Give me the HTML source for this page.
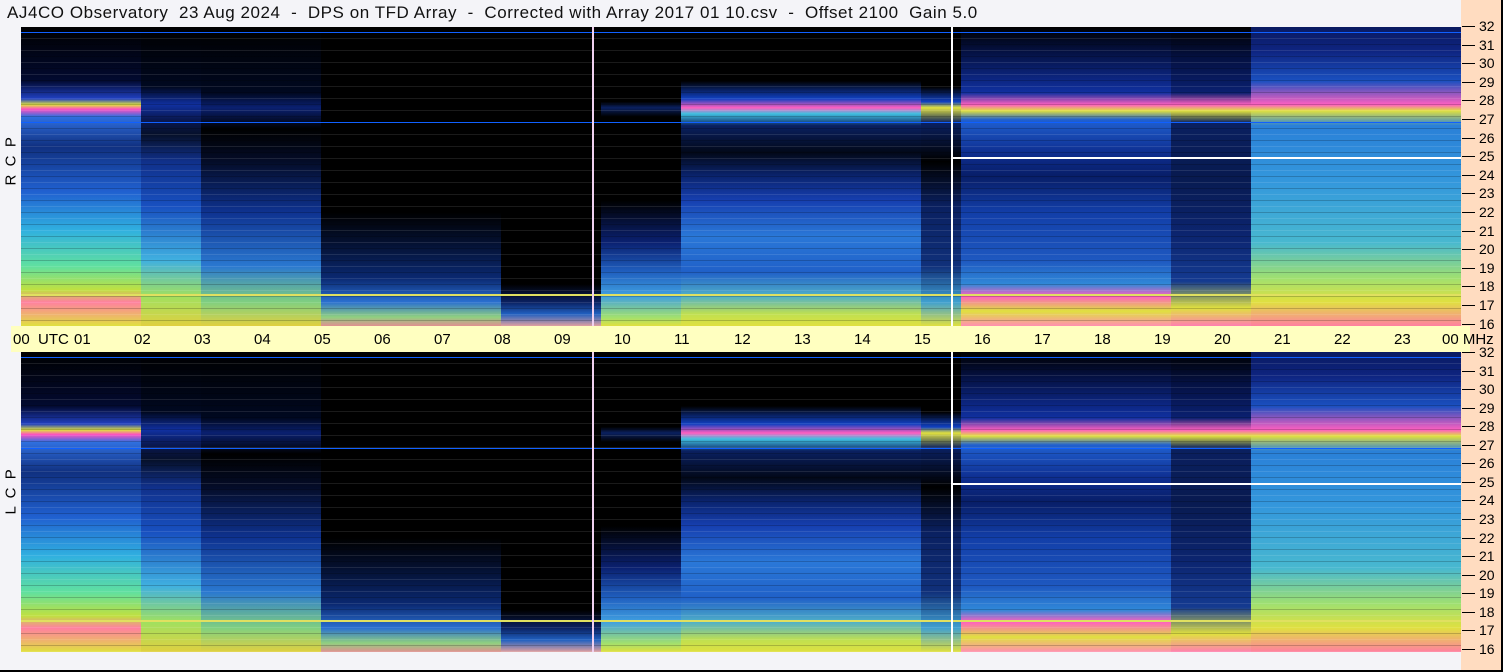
<!DOCTYPE html><html><head><style>
*{margin:0;padding:0;box-sizing:border-box}
body{width:1503px;height:672px;background:#f4f4f8;position:relative;overflow:hidden;font-family:"Liberation Sans",sans-serif}
#frame{position:absolute;right:0;top:0;width:2px;height:672px;background:#000}
#frameb{position:absolute;left:0;bottom:0;width:1503px;height:2px;background:#000}
#title{position:absolute;left:7px;top:3px;font-size:17px;letter-spacing:0.55px;color:#111;white-space:pre}
#peach{position:absolute;left:1461px;top:0;width:40px;height:670px;background:#ffdcc0}
.panel{position:absolute;left:21px;width:1440px;display:flex;overflow:hidden;background:#000}
.panel div{height:100%}
#p1{top:27px;height:299px}#p2{top:352px;height:300px}
.A{width:120px;background:linear-gradient(#000 0,#020a30 18%,#2040c0 24%,#e0e040 26%,#ff50c0 27.5%,#3070e0 30%,#103080 40%,#2060d0 55%,#30b0e0 68%,#60e0a0 80%,#c0e040 88%,#ff80a0 92%,#e0e040 100%)}
.B{width:60px;background:linear-gradient(#000 0,#000820 20%,#1030a0 26%,#0a1850 31%,#06102a 36%,#10308a 45%,#1850c0 60%,#40b0e0 78%,#a0e060 90%,#e0d040 100%)}
.B2{width:120px;background:linear-gradient(#000 0,#000820 22%,#0a2070 27%,#000 34%,#040c28 45%,#0e3290 62%,#2a78d0 80%,#80d080 92%,#e0d040 100%)}
.C{width:180px;background:linear-gradient(#000 0,#000 62%,#041030 72%,#0a2870 84%,#2a70d0 92%,#90d080 97%,#e09090 100%)}
.D{width:100px;background:linear-gradient(#000 0,#000 86%,#0a2060 92%,#2060c0 96%,#e0a0a0 100%)}
.E{width:80px;background:linear-gradient(#000 0,#000 25%,#0a2060 27%,#000 30%,#000 58%,#0a2070 72%,#2060c0 82%,#40a0e0 90%,#a0e070 97%,#e0e040 100%)}
.F{width:240px;background:linear-gradient(#000 0,#000 18%,#1040c0 24%,#ff60c0 27%,#40c0e0 29%,#0a2060 33%,#020818 42%,#0a2470 50%,#163fb0 58%,#2a78d8 70%,#2060c8 82%,#50b0c8 90%,#c0e050 96%,#e0e040 100%)}
.G{width:40px;background:linear-gradient(#000 0,#000 20%,#1040c0 25%,#e0e040 27%,#0a2060 32%,#000 45%,#0a2060 60%,#10307a 80%,#40a0d0 92%,#e0e040 100%)}
.H{width:210px;background:linear-gradient(#000 0,#041040 8%,#0a2070 15%,#1030a0 22%,#ff60c0 26%,#e0e040 28%,#2060d0 31%,#0e2e90 42%,#081e68 50%,#123ea8 62%,#1e58c0 78%,#3088d8 86%,#ff60c0 90%,#e0e040 95%,#ff90b0 100%)}
.I{width:80px;background:linear-gradient(#000 0,#041040 10%,#0a2070 22%,#ff60c0 26%,#e0e040 28%,#0a2060 32%,#081a50 50%,#0c2570 70%,#143a90 85%,#e0e040 94%,#ff80b0 100%)}
.J{width:210px;background:linear-gradient(#0a1a60 0,#0e2480 8%,#1a50c0 18%,#ff60c0 26%,#e0e040 28%,#2a80d8 33%,#3498dc 52%,#48b8d0 72%,#a0e070 84%,#e0e040 92%,#ff80a0 100%)}
.ov{position:absolute;left:21px;width:1440px;pointer-events:none;
background:repeating-linear-gradient(180deg,rgba(0,0,0,0) 0,rgba(0,0,0,0) 5px,rgba(0,0,0,.2) 5px,rgba(0,0,0,.2) 6px,rgba(0,0,0,0) 6px,rgba(0,0,0,0) 11px,rgba(255,255,255,.1) 11px,rgba(255,255,255,.1) 12px)}
.hl{position:absolute;height:1px}
.vl{position:absolute;width:2px;background:#fff}
#bar{position:absolute;left:11px;top:326px;width:1459px;height:26px;background:#ffffc0}
.lab{position:absolute;font-size:15px;color:#000;top:331px;white-space:pre}
.rl{position:absolute;left:1479px;font-size:14px;color:#000}
.rt{position:absolute;left:1462px;width:13px;height:1px;background:#000}
.side{position:absolute;left:2px;width:18px;font-size:15px;transform:rotate(-90deg);white-space:pre;text-align:center}
</style></head><body>
<div id="title">AJ4CO Observatory  23 Aug 2024  -  DPS on TFD Array  -  Corrected with Array 2017 01 10.csv  -  Offset 2100  Gain 5.0</div>
<div id="peach"></div>
<div class="panel" id="p1"><div class="A"></div><div class="B"></div><div class="B2"></div><div class="C"></div><div class="D"></div><div class="E"></div><div class="F"></div><div class="G"></div><div class="H"></div><div class="I"></div><div class="J"></div></div>
<div class="panel" id="p2"><div class="A"></div><div class="B"></div><div class="B2"></div><div class="C"></div><div class="D"></div><div class="E"></div><div class="F"></div><div class="G"></div><div class="H"></div><div class="I"></div><div class="J"></div></div>
<div class="ov" style="top:27px;height:299px"></div>
<div class="ov" style="top:352px;height:300px"></div>
<div class="hl" style="left:21px;width:1440px;top:32px;background:#1060ff"></div>
<div class="hl" style="left:21px;width:1440px;top:122px;background:#1060ff"></div>
<div class="hl" style="left:951px;width:510px;top:157px;height:2px;background:#fff"></div>
<div class="hl" style="left:21px;width:1440px;top:294px;height:2px;background:#e0e060"></div>
<div class="hl" style="left:21px;width:1440px;top:357px;background:#1060ff"></div>
<div class="hl" style="left:21px;width:1440px;top:448px;background:#1060ff"></div>
<div class="hl" style="left:951px;width:510px;top:483px;height:2px;background:#fff"></div>
<div class="hl" style="left:21px;width:1440px;top:620px;height:2px;background:#e0e060"></div>
<div class="vl" style="left:592px;top:27px;height:299px;background:#f0d0f0"></div>
<div class="vl" style="left:951px;top:27px;height:299px"></div>
<div class="vl" style="left:592px;top:352px;height:300px;background:#f0d0f0"></div>
<div class="vl" style="left:951px;top:352px;height:300px"></div>
<div class="side" style="top:168px">R  C  P</div>
<div class="side" style="top:497px">L  C  P</div>
<div id="bar"></div>
<div class="lab" style="left:13px">00  UTC</div>
<div class="lab" style="left:74px">01</div><div class="lab" style="left:134px">02</div><div class="lab" style="left:194px">03</div><div class="lab" style="left:254px">04</div><div class="lab" style="left:314px">05</div><div class="lab" style="left:374px">06</div><div class="lab" style="left:434px">07</div><div class="lab" style="left:494px">08</div><div class="lab" style="left:554px">09</div><div class="lab" style="left:614px">10</div><div class="lab" style="left:674px">11</div><div class="lab" style="left:734px">12</div><div class="lab" style="left:794px">13</div><div class="lab" style="left:854px">14</div><div class="lab" style="left:914px">15</div><div class="lab" style="left:974px">16</div><div class="lab" style="left:1034px">17</div><div class="lab" style="left:1094px">18</div><div class="lab" style="left:1154px">19</div><div class="lab" style="left:1214px">20</div><div class="lab" style="left:1274px">21</div><div class="lab" style="left:1334px">22</div><div class="lab" style="left:1394px">23</div><div class="lab" style="left:1442px">00 MHz</div>
<div class="rt" style="top:26px"></div><div class="rl" style="top:18px">32</div>
<div class="rt" style="top:45px"></div><div class="rl" style="top:37px">31</div>
<div class="rt" style="top:63px"></div><div class="rl" style="top:55px">30</div>
<div class="rt" style="top:82px"></div><div class="rl" style="top:74px">29</div>
<div class="rt" style="top:100px"></div><div class="rl" style="top:92px">28</div>
<div class="rt" style="top:119px"></div><div class="rl" style="top:111px">27</div>
<div class="rt" style="top:138px"></div><div class="rl" style="top:130px">26</div>
<div class="rt" style="top:156px"></div><div class="rl" style="top:148px">25</div>
<div class="rt" style="top:175px"></div><div class="rl" style="top:167px">24</div>
<div class="rt" style="top:193px"></div><div class="rl" style="top:185px">23</div>
<div class="rt" style="top:212px"></div><div class="rl" style="top:204px">22</div>
<div class="rt" style="top:231px"></div><div class="rl" style="top:223px">21</div>
<div class="rt" style="top:249px"></div><div class="rl" style="top:241px">20</div>
<div class="rt" style="top:268px"></div><div class="rl" style="top:260px">19</div>
<div class="rt" style="top:286px"></div><div class="rl" style="top:278px">18</div>
<div class="rt" style="top:305px"></div><div class="rl" style="top:297px">17</div>
<div class="rt" style="top:324px"></div><div class="rl" style="top:316px">16</div>
<div class="rt" style="top:352px"></div><div class="rl" style="top:344px">32</div>
<div class="rt" style="top:371px"></div><div class="rl" style="top:363px">31</div>
<div class="rt" style="top:389px"></div><div class="rl" style="top:381px">30</div>
<div class="rt" style="top:408px"></div><div class="rl" style="top:400px">29</div>
<div class="rt" style="top:426px"></div><div class="rl" style="top:418px">28</div>
<div class="rt" style="top:445px"></div><div class="rl" style="top:437px">27</div>
<div class="rt" style="top:463px"></div><div class="rl" style="top:455px">26</div>
<div class="rt" style="top:482px"></div><div class="rl" style="top:474px">25</div>
<div class="rt" style="top:500px"></div><div class="rl" style="top:492px">24</div>
<div class="rt" style="top:519px"></div><div class="rl" style="top:511px">23</div>
<div class="rt" style="top:538px"></div><div class="rl" style="top:530px">22</div>
<div class="rt" style="top:556px"></div><div class="rl" style="top:548px">21</div>
<div class="rt" style="top:575px"></div><div class="rl" style="top:567px">20</div>
<div class="rt" style="top:593px"></div><div class="rl" style="top:585px">19</div>
<div class="rt" style="top:612px"></div><div class="rl" style="top:604px">18</div>
<div class="rt" style="top:630px"></div><div class="rl" style="top:622px">17</div>
<div class="rt" style="top:649px"></div><div class="rl" style="top:641px">16</div>
<div id="frame"></div><div id="frameb"></div>
</body></html>
